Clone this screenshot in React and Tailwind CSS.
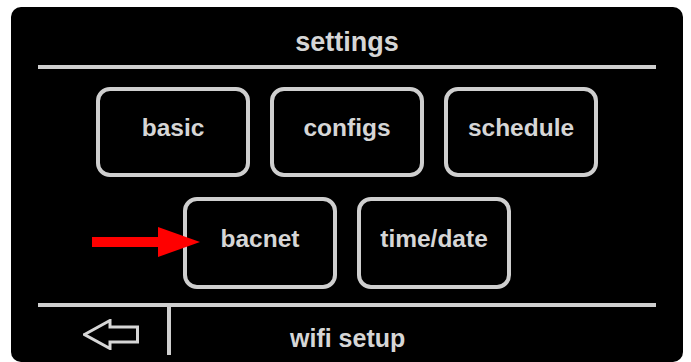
import React from 'react';

const menuRows = [
  ['basic', 'configs', 'schedule'],
  ['bacnet', 'time/date'],
];

function MenuButton({ label, tall }) {
  return (
    <button
      className={`w-[154px] ${tall ? 'h-[92px]' : 'h-[90px]'} flex items-center justify-center pb-[7px] border-[4px] border-[#cfcfcf] rounded-[14px] bg-black text-[#d6d6d6] text-[24.5px] leading-none font-bold`}
    >
      {label}
    </button>
  );
}

function BackArrow() {
  return (
    <svg width="56" height="31" viewBox="0 0 56 31" fill="none">
      <path
        d="M1.5 15.5 L27 1.5 L27 8 L54.5 8 L54.5 23 L27 23 L27 29.5 Z"
        stroke="#d6d6d6"
        strokeWidth="3"
        strokeLinejoin="miter"
      />
    </svg>
  );
}

function RedArrow() {
  return (
    <svg width="108" height="30" viewBox="0 0 108 30">
      <rect x="0" y="10" width="67" height="10" fill="#ff0000" />
      <polygon points="66,0 108,15 66,30" fill="#ff0000" />
    </svg>
  );
}

export default function App() {
  return (
    <div className="w-[691px] h-[362px] overflow-hidden bg-white pt-[7px] pl-[11px] font-['Liberation_Sans',Arial,sans-serif]">
      <div className="relative w-[672px] h-[355px] rounded-[10px] bg-black flex flex-col">
        {/* header */}
        <div className="h-[58px] pt-[13px] flex items-center justify-center">
          <span className="text-[27px] leading-none font-bold text-[#d6d6d6]">settings</span>
        </div>
        <div className="mx-[27px] h-[4px] bg-[#cfcfcf]" />

        {/* menu */}
        <div className="mt-[18px] flex flex-col gap-[20px]">
          {menuRows.map((row, i) => (
            <div key={i} className="flex justify-center gap-[20px]">
              {row.map((label) => (
                <MenuButton key={label} label={label} tall={i === 1} />
              ))}
            </div>
          ))}
        </div>

        {/* pointer to bacnet */}
        <div className="absolute left-[81px] top-[220px]">
          <RedArrow />
        </div>

        <div className="mt-[14px] mx-[27px] h-[4px] bg-[#cfcfcf]" />

        {/* footer */}
        <div className="mx-[27px] flex flex-1">
          <div className="w-[129px] pl-[45px] pt-[12px]">
            <BackArrow />
          </div>
          <div className="w-[4px] h-[48px] bg-[#cfcfcf]" />
          <div className="pl-[119px] pt-[19px]">
            <span className="text-[25px] leading-none font-bold text-[#d6d6d6]">wifi setup</span>
          </div>
        </div>
      </div>
    </div>
  );
}
